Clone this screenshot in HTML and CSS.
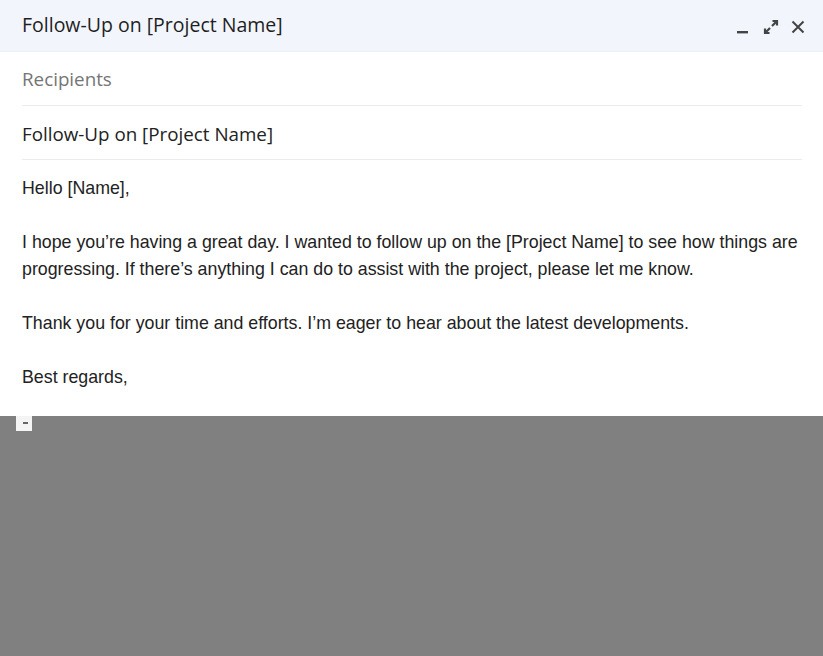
FILE: index.html
```html
<!DOCTYPE html>
<html lang="en">
<head>
    <meta charset="UTF-8">
    <title>Compose</title>
    <link rel="stylesheet" href="styles.css">
</head>
<body>
    <div class="compose">
        <div class="compose-head">
            <span class="compose-title">Follow-Up on [Project Name]</span>
            <div class="head-icons">
                <svg width="14" height="14" viewBox="0 0 14 14"><rect x="0" y="11" width="11" height="2.4" fill="#444"/></svg>
                <svg width="16" height="16" viewBox="0 0 16 16" fill="none" stroke="#444" stroke-width="2.2">
                    <path d="M9 7 14 2M9.5 2H14V6.5M7 9 2 14M2 9.5V14H6.5"/>
                </svg>
                <svg width="14" height="14" viewBox="0 0 14 14" fill="none" stroke="#444" stroke-width="2"><path d="M1.5 1.5 12.5 12.5M12.5 1.5 1.5 12.5"/></svg>
            </div>
        </div>
        <div class="field recipients">Recipients</div>
        <div class="field subject">Follow-Up on [Project Name]</div>
        <div class="body-text">
            <p>Hello [Name],</p>
            <p>I hope you’re having a great day. I wanted to follow up on the [Project Name] to see how things are progressing. If there’s anything I can do to assist with the project, please let me know.</p>
            <p>Thank you for your time and efforts. I’m eager to hear about the latest developments.</p>
            <p>Best regards,</p>
        </div>
    </div>
    <div class="shade">
        <div class="corner"><span></span></div>
    </div>
</body>
</html>
```
FILE: styles.css
```css
body {
    margin: 0;
    background: #fff;
    height: 656px;
    display: flex;
    flex-direction: column;
    overflow: hidden;
}

.compose-head {
    height: 51px;
    background: #f2f6fc;
    border-bottom: 1px solid #eef0f8;
    display: flex;
    align-items: center;
    justify-content: space-between;
    padding: 0 18px 0 22px;
}

.compose-title {
    font-family: "Open Sans", sans-serif;
    font-size: 19.5px;
    color: #1f1f1f;
    padding-bottom: 3px;
}

.head-icons {
    display: flex;
    align-items: center;
    gap: 12px;
    padding-top: 2px;
}

.field {
    margin: 0 21px 0 22px;
    border-bottom: 1px solid #ebebeb;
    font-family: "Open Sans", sans-serif;
    font-size: 18.8px;
    height: 54px;
    line-height: 54px;
    box-sizing: border-box;
}

.recipients {
    color: #757575;
    line-height: 54px;
}

.subject {
    color: #222;
    line-height: 56px;
}

.body-text {
    padding: 15px 10px 0 22px;
    font-family: "Liberation Sans", Arial, sans-serif;
    font-size: 17.8px;
    line-height: 27px;
    color: #222;
    height: 241px;
}

.body-text p {
    margin: 0 0 27px;
}

.shade {
    flex: 1;
    background: #808080;
    position: relative;
}

.corner {
    position: absolute;
    left: 16px;
    top: 0;
    width: 16px;
    height: 15px;
    background: #f4f4f4;
}

.corner span {
    position: absolute;
    left: 7px;
    top: 6px;
    width: 5px;
    height: 2px;
    background: #666;
}
```
